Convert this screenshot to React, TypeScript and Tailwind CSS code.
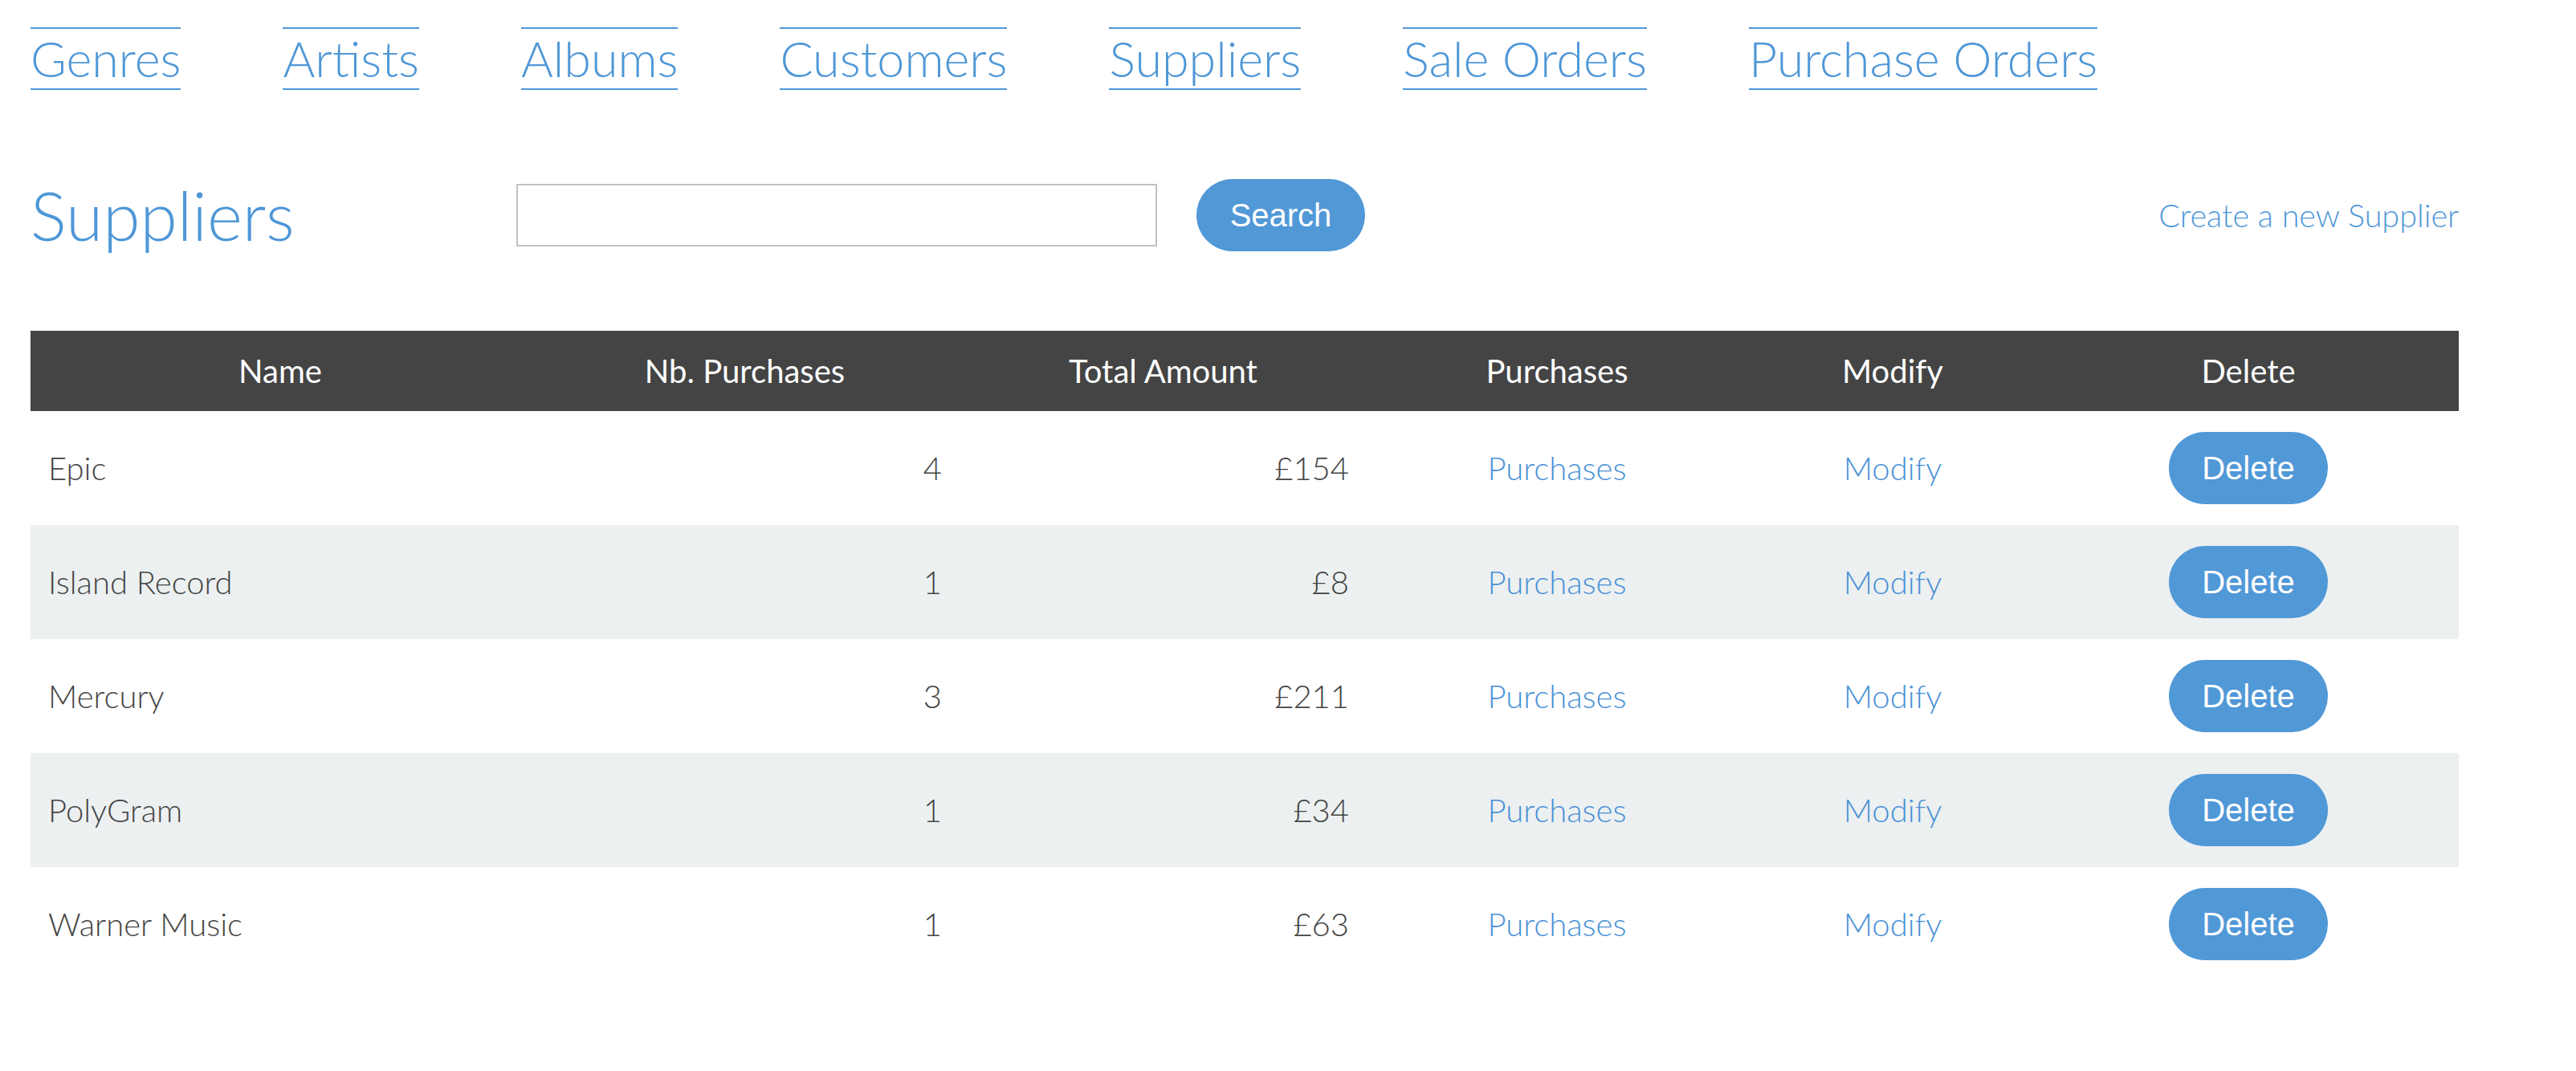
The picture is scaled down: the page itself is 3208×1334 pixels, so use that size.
const navItems = [
  "Genres",
  "Artists",
  "Albums",
  "Customers",
  "Suppliers",
  "Sale Orders",
  "Purchase Orders",
];

interface Supplier {
  name: string;
  nbPurchases: number;
  total: string;
}

const suppliers: Supplier[] = [
  { name: "Epic", nbPurchases: 4, total: "£154" },
  { name: "Island Record", nbPurchases: 1, total: "£8" },
  { name: "Mercury", nbPurchases: 3, total: "£211" },
  { name: "PolyGram", nbPurchases: 1, total: "£34" },
  { name: "Warner Music", nbPurchases: 1, total: "£63" },
];

const cols = "grid grid-cols-[622px_535px_507px_474px_362px_524px]";

export default function App() {
  return (
    <div className="min-h-[1334px] bg-white font-['Lato','Noto_Sans',sans-serif]">
      <div className="w-[3024px] ml-[38px]">
        {/* Top navigation */}
        <nav className="flex gap-[127px] pt-[34px]">
          {navItems.map((item) => (
            <a
              key={item}
              href="#"
              className="border-y-2 border-[#4f97d7] text-[61px] leading-[74px] font-light text-[#4f97d7]"
            >
              {item}
            </a>
          ))}
        </nav>

        {/* Title + search */}
        <div className="flex items-center justify-between h-[100px] mt-[106px]">
          <div className="flex items-center">
            <h1 className="w-[605px] text-[84px] leading-none font-light text-[#4f97d7]">
              Suppliers
            </h1>
            <input
              type="text"
              className="w-[798px] h-[78px] border-2 border-[#c2c2c2] bg-white outline-none"
            />
            <button className="ml-[49px] w-[210px] h-[90px] rounded-full bg-[#5198d7] text-white text-[40px] font-['Liberation_Sans',Arial,sans-serif]">
              Search
            </button>
          </div>
          <a href="#" className="text-[39.5px] leading-none font-light text-[#4f97d7]">
            Create a new Supplier
          </a>
        </div>

        {/* Table */}
        <div className="mt-[94px]">
          <div className={`${cols} h-[100px] items-center bg-[#444444] text-white text-[40px] text-center`}>
            <div>Name</div>
            <div>Nb. Purchases</div>
            <div>Total Amount</div>
            <div>Purchases</div>
            <div>Modify</div>
            <div>Delete</div>
          </div>
          {suppliers.map((s, i) => (
            <div
              key={s.name}
              className={`${cols} h-[142px] items-center text-[40px] font-light text-[#444444] ${
                i % 2 === 1 ? "bg-[#ecf0f1]" : "bg-white"
              }`}
            >
              <div className="px-[22px]">{s.name}</div>
              <div className="px-[22px] text-right">{s.nbPurchases}</div>
              <div className="px-[22px] text-right">{s.total}</div>
              <div className="text-center">
                <a href="#" className="text-[#4a91d6]">Purchases</a>
              </div>
              <div className="text-center">
                <a href="#" className="text-[#4a91d6]">Modify</a>
              </div>
              <div className="flex justify-center">
                <button className="w-[198px] h-[90px] rounded-full bg-[#5198d7] text-white text-[40px] font-normal font-['Liberation_Sans',Arial,sans-serif]">
                  Delete
                </button>
              </div>
            </div>
          ))}
        </div>
      </div>
    </div>
  );
}
